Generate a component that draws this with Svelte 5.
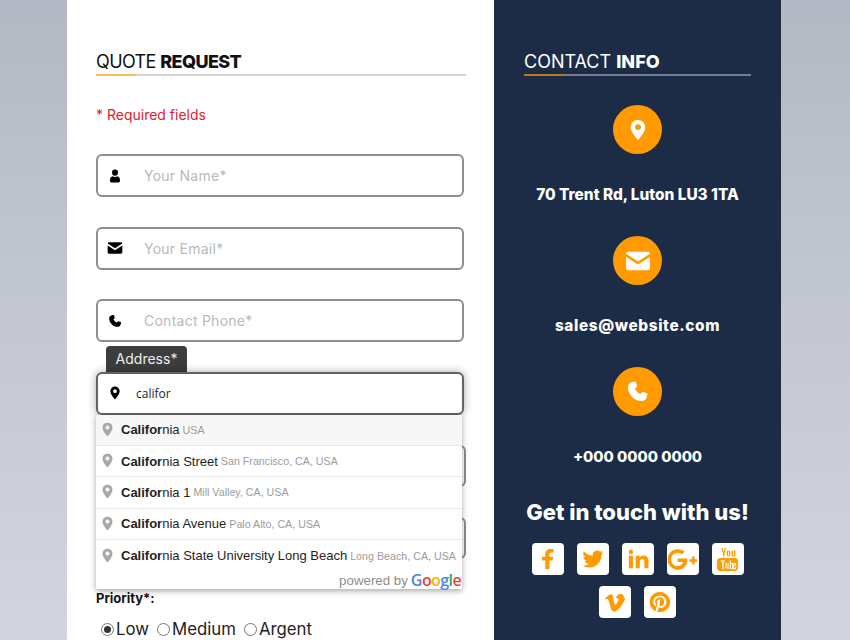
<script>
  const fields = [
    { ph: 'Your Name*', icon: 'user' },
    { ph: 'Your Email*', icon: 'mail' },
    { ph: 'Contact Phone*', icon: 'phone' }
  ];
  const suggestions = [
    { tail: '', sub: 'USA', active: true },
    { tail: ' Street', sub: 'San Francisco, CA, USA' },
    { tail: ' 1', sub: 'Mill Valley, CA, USA' },
    { tail: ' Avenue', sub: 'Palo Alto, CA, USA' },
    { tail: ' State University Long Beach', sub: 'Long Beach, CA, USA' }
  ];
  const paths = {
    pin: 'M12 1a8 8 0 0 0-8 8c0 5.500 8 14 8 14s8-8.500 8-14a8 8 0 0 0-8-8zm0 11a3.200 3.200 0 1 1 0-6.400 3.200 3.200 0 0 1 0 6.400z',
    user: 'M12 1a5 5 0 0 1 5 5.500 5 5 0 0 1-10 0A5 5 0 0 1 12 1zM8 12.500c1 .8 2.500 1.300 4 1.300s3-.5 4-1.300c3 .4 4.500 3 4.500 6.500v2c0 1-1 2-2 2h-13c-1 0-2-1-2-2v-2c0-3.500 1.500-6.100 4.500-6.500z',
    mail: 'M3 3.500h18a2 2 0 0 1 2 1.800L12 12.500 1 5.300a2 2 0 0 1 2-1.800zM1 8.300l11 7 11-7V18.500a2 2 0 0 1-2 2H3a2 2 0 0 1-2-2z',
    phone: 'M6.600 2.200 9 1.600c.5-.1 1 .1 1.200.6l1.300 3.800c.2.400 0 .9-.3 1.200L9.300 8.800c1 2.400 3.400 4.900 5.900 5.900l1.600-1.900c.3-.3.800-.5 1.200-.3l3.800 1.300c.5.200.7.700.6 1.200l-.6 2.400C21.200 20.200 19 22 16.500 22 9 22 2 15 2 7.500 2 5 3.800 2.800 6.600 2.200z'
  };
</script>

<div class="page">
  <main class="sheet">
    <section class="form-col">
      <h2 class="title dark"><span>QUOTE</span> <b>REQUEST</b></h2>
      <p class="required">* Required fields</p>

      <div class="fields">
        {#each fields as f}
          <div class="field">
            <svg class="ficon {f.icon}" viewBox="0 0 24 24"><path d={paths[f.icon]} /></svg>
            <span class="ph">{f.ph}</span>
          </div>
        {/each}

        <div class="addr">
          <div class="addr-label">Address*</div>
          <div class="field focus">
            <svg class="ficon" viewBox="0 0 24 24"><path d={paths.pin} /></svg>
            <span class="typed">califor</span>
          </div>
          <div class="under">
            <div class="ghost"></div>
            <div class="ghost"></div>
          </div>
          <div class="pac">
            {#each suggestions as s}
              <div class="pac-row" class:active={s.active}>
                <svg class="pac-pin" viewBox="0 0 24 24"><path d={paths.pin} /></svg>
                <span class="pac-main"><b>Califor</b>nia{s.tail}</span>
                <span class="pac-sub">{s.sub}</span>
              </div>
            {/each}
            <div class="powered">
              <span>powered by</span>
              <span class="google"><i class="b">G</i><i class="r">o</i><i class="y">o</i><i class="b">g</i><i class="g">l</i><i class="r">e</i></span>
            </div>
          </div>
        </div>
      </div>

      <div class="priority">
        <div class="plabel">Priority*:</div>
        <div class="radios">
          <span class="radio on"></span><span class="rtext">Low</span>
          <span class="radio"></span><span class="rtext">Medium</span>
          <span class="radio"></span><span class="rtext">Argent</span>
        </div>
      </div>
    </section>

    <aside class="info-col">
      <h2 class="title light"><span>CONTACT</span> <b>INFO</b></h2>

      <div class="circle first"><svg class="c-pin" viewBox="0 0 24 24"><path d={paths.pin} /></svg></div>
      <div class="info-text">70 Trent Rd, Luton LU3 1TA</div>
      <div class="circle"><svg class="c-mail" viewBox="0 0 24 24"><path d={paths.mail} /></svg></div>
      <div class="info-text wide">sales@website.com</div>
      <div class="circle"><svg class="c-phone" viewBox="0 0 24 24"><path d={paths.phone} /></svg></div>
      <div class="info-text num">+000 0000 0000</div>

      <div class="touch">Get in touch with us!</div>
      <div class="socials">
        <div class="soc"><svg viewBox="0 0 24 24"><path d="M9 23v-9.500H5.500V9.500H9V7c0-3.800 2.200-6 5.700-6 1.500 0 2.800.1 3.300.2v3.800h-2.300c-1.800 0-2.200.9-2.200 2.100v2.400h4.300l-.6 4h-3.700V23z" /></svg></div>
        <div class="soc"><svg viewBox="0 0 24 24"><path d="M23.500 5a9.300 9.300 0 0 1-2.700.7 4.700 4.700 0 0 0 2-2.600 9.400 9.400 0 0 1-3 1.100 4.700 4.700 0 0 0-8 4.300A13.300 13.300 0 0 1 2.100 3.600 4.700 4.700 0 0 0 3.600 9.900a4.700 4.700 0 0 1-2.100-.6c0 2.300 1.600 4.300 3.800 4.700a4.700 4.700 0 0 1-2.100.1 4.700 4.700 0 0 0 4.400 3.200A9.400 9.400 0 0 1 .6 19.300 13.300 13.300 0 0 0 7.800 21.400c8.700 0 13.500-7.200 13.500-13.500v-.6A9.500 9.500 0 0 0 23.500 5z" /></svg></div>
        <div class="soc"><svg viewBox="0 0 24 24"><path d="M2 8.500h4.500V22H2zM4.250 2a2.400 2.400 0 1 1 0 4.800 2.400 2.400 0 0 1 0-4.800zM9.500 8.500h4.300v1.900c.7-1.200 2.200-2.200 4.300-2.200 4.300 0 5.400 2.700 5.400 6.700V22H19v-6.300c0-2-.4-3.600-2.400-3.600s-2.700 1.500-2.700 3.500V22H9.500z" /></svg></div>
        <div class="soc"><svg class="s-gplus" viewBox="0 0 24 24"><path d="M8 11.200v2.900h4.500c-.4 2-2.100 3.400-4.500 3.400a5.500 5.500 0 0 1 0-11c1.400 0 2.600.5 3.500 1.300l2.200-2.200A8.500 8.500 0 1 0 8 20.500c4.900 0 8-3.400 8-8.200 0-.4 0-.8-.1-1.100zM20 9.500v2.300h-2.300v2H20v2.300h2v-2.300h2v-2h-2V9.500z" /></svg></div>
        <div class="soc"><svg class="s-yt" viewBox="0 0 24 24"><path d="M6 1h1.400l1 3.500L9.400 1h1.400L9.100 5.900V9H7.700V5.900zM13 3.300c1.100 0 1.800.7 1.800 1.800v2.200c0 1.100-.7 1.800-1.800 1.800s-1.800-.7-1.800-1.800V5.100c0-1.100.7-1.800 1.800-1.800zm-.5 1.500v2.800c0 .8 1 .8 1 0V4.800c0-.8-1-.8-1 0zM16 3.400h1.300v4.500c0 .4.600.3.900-.1V3.400h1.300V9h-1.300v-.6c-.8.900-2.200 1-2.200-.3zM5 10.500h14a3 3 0 0 1 3 3v6.500a3 3 0 0 1-3 3H5a3 3 0 0 1-3-3v-6.500a3 3 0 0 1 3-3zm.5 2.300v1.200h1.400v7H8.200v-7h1.400v-1.200zm4.500 2.200v4.900c0 1.200 1.300 1 2-.1v1h1.100V15H12v4.500c-.3.400-.9.500-.9.100V15zm4.200-2.200V21h1.100v-.5c.9 1 2.100.5 2.100-.8v-3.300c0-1.400-1.200-1.800-2.100-.8v-2.800zm1.100 3.700c.3-.4 1-.4 1 .2v2.900c0 .6-.7.6-1 .2zm5.100 1.800v-1.300c0-2.400-3.300-2.400-3.300 0v2.700c0 2.500 3.300 2.400 3.300 0v-.4h-1.100c0 1.300-1.100 1.300-1.100.2v-1.200zm-2.200-1c0-1.200 1.100-1.200 1.100 0v.2h-1.100z" /></svg></div>
        <div class="soc"><svg viewBox="0 0 24 24"><path d="M23 7.500c-.1 2.200-1.600 5.200-4.600 9-3 4-5.600 6-7.700 6-1.300 0-2.400-1.200-3.300-3.600L5.600 12C4.900 9.600 4.200 8.400 3.500 8.400c-.2 0-.7.300-1.600 1L1 8.100c1-.9 2-1.700 3-2.600 1.300-1.200 2.400-1.800 3-1.900 1.600-.2 2.600.9 3 3.300.4 2.500.7 4.100.8 4.700.5 2.100 1 3.100 1.600 3.100.4 0 1.100-.7 1.900-2 .9-1.400 1.300-2.400 1.400-3.100.1-1.200-.4-1.800-1.400-1.800-.5 0-1 .1-1.500.3 1-3.300 3-4.900 5.800-4.800 2.100.1 3.200 1.500 3 4.200z" /></svg></div>
        <div class="soc"><svg viewBox="0 0 24 24"><path fill-rule="evenodd" d="M12 1a11 11 0 1 1-3.300 21.500c.4-.7 1-1.700 1.300-2.700l.7-2.600c.3.700 1.400 1.300 2.500 1.300 3.400 0 5.800-3.100 5.800-7 0-3.700-3-6.400-6.900-6.400-4.800 0-7.400 3.200-7.400 6.800 0 1.700.9 3.700 2.300 4.400.2.100.4 0 .4-.2l.3-1.300c0-.1 0-.3-.1-.4-.5-.6-.9-1.600-.9-2.600 0-2.500 1.900-4.900 5.100-4.900 2.800 0 4.700 1.900 4.700 4.600 0 3-1.500 5.100-3.500 5.100-1.100 0-1.900-.9-1.700-2 .3-1.300.9-2.700.9-3.700 0-.8-.4-1.500-1.400-1.500-1.100 0-2 1.200-2 2.700 0 1 .3 1.600.3 1.600l-1.400 5.700c-.2.900-.1 2-.1 2.800A11 11 0 0 1 12 1z" /></svg></div>
      </div>
    </aside>
  </main>
</div>

<style>
  :global(body) { margin: 0; }
  .page {
    width: 850px;
    height: 640px;
    overflow: hidden;
    background: linear-gradient(180deg, #b4b8c4 0%, #c2c6d0 45%, #d2d5de 100%);
    font-family: "Inter", "Liberation Sans", sans-serif;
  }
  .sheet { display: flex; width: 714px; height: 640px; margin-left: 67px; }
  .form-col { width: 427px; background: #fff; padding: 52px 29px 0; box-sizing: border-box; overflow: hidden; }
  .info-col { width: 287px; background: #1c2c47; padding: 52px 30px 0; box-sizing: border-box; color: #fff; text-align: center; }

  .title {
    position: relative;
    margin: 0;
    font-size: 18px;
    line-height: 20px;
    height: 22px;
    font-weight: 400;
    text-align: left;
    border-bottom: 2px solid #d6d6d6;
  }
  .title b { font-weight: 800; }
  .title::after {
    content: "";
    position: absolute;
    left: 0;
    bottom: -2px;
    width: 40px;
    height: 2px;
    background: #fbbf62;
  }
  .dark { color: #111; width: 370px; letter-spacing: -0.6px; }
  .light { color: #fff; width: 227px; border-bottom-color: #747d8b; }
  .light::after { background: #b97a1d; }

  .required { margin: 29px 0 0; font-size: 14px; line-height: 20px; color: #e2202c; }

  .fields { margin-top: 29px; display: flex; flex-direction: column; gap: 29.5px; width: 368px; }
  .field {
    display: flex;
    align-items: center;
    height: 43px;
    box-sizing: border-box;
    border: 2px solid #8c8e90;
    border-radius: 6px;
    background: #fff;
    padding-left: 10px;
  }
  .ficon { width: 14px; height: 14px; fill: #000; flex: none; }
  .ficon.mail { width: 16px; height: 16px; margin: 0 -1px; }
  .ph { margin-left: 22px; font-size: 14px; color: #b9b9b9; letter-spacing: 0.25px; }

  .addr { position: relative; }
  .addr-label {
    position: absolute;
    left: 10px;
    top: -26px;
    width: 81px;
    height: 26px;
    line-height: 25px;
    text-align: center;
    font-size: 14px;
    color: #eee;
    background: #3d3d3d;
    border-radius: 4px 4px 0 0;
  }
  .focus { box-shadow: 0 0 8px rgba(0,0,0,.35); position: relative; z-index: 1; border-color: #606366; }
  .typed { margin-left: 14px; font-family: "Open Sans", sans-serif; font-size: 12px; color: #222; }

  .under { display: flex; flex-direction: column; gap: 30px; margin-top: 30px; margin-right: -2px; }
  .ghost { height: 42px; box-sizing: border-box; border: 2px solid #8c8e90; border-radius: 6px; }

  .pac {
    position: absolute;
    left: 0;
    top: 43px;
    width: 366px;
    background: #fff;
    box-shadow: 0 2px 6px rgba(0,0,0,.35);
    z-index: 2;
    font-family: "Liberation Sans", Arial, sans-serif;
  }
  .pac-row {
    display: flex;
    align-items: center;
    height: 31.4px;
    box-sizing: border-box;
    border-bottom: 1px solid #e9e9e9;
    padding-left: 4px;
    white-space: nowrap;
    overflow: hidden;
  }
  .pac-row:nth-child(5) { border-bottom: 0; }
  .pac-row.active { background: #f7f7f7; }
  .pac-pin { width: 15px; height: 15px; fill: #a8a8a8; flex: none; margin: -1px 6px 0 0; }
  .pac-main { font-size: 13px; color: #1f1f1f; }
  .pac-main b { font-weight: 700; }
  .pac-sub { font-size: 10.7px; color: #9c9c9c; margin-left: 3px; }
  .powered { display: flex; align-items: center; justify-content: flex-end; height: 18px; font-size: 13.3px; color: #8d8d8d; gap: 3px; padding-right: 1px; }
  .google { font-size: 16px; letter-spacing: -0.6px; }
  .google i { font-style: normal; font-family: "Open Sans", sans-serif; font-weight: 600; }
  .b { color: #4a86e8; } .r { color: #ea4335; } .y { color: #f4b400; } .g { color: #34a853; }

  .priority { margin-top: 30.5px; }
  .plabel { font-size: 13px; line-height: 18px; font-weight: 700; color: #111; }
  .radios { display: flex; align-items: center; margin: 12px 0 0 5px; font-size: 16.8px; line-height: 20px; color: #222; }
  .radio { width: 13px; height: 13px; border: 1px solid #767676; border-radius: 50%; box-sizing: border-box; position: relative; margin-right: 2px; }
  .radio.on::after { content: ""; position: absolute; inset: 2px; background: #333; border-radius: 50%; }
  .rtext { margin-right: 8px; }

  .circle { width: 49px; height: 49px; border-radius: 50%; background: #ff9b00; margin: 0 auto; display: flex; align-items: center; justify-content: center; }
  .circle.first { margin-top: 29px; }
  .circle svg { fill: #fff; }
  .c-pin { width: 22px; height: 22px; }
  .c-mail { width: 26px; height: 26px; }
  .c-phone { width: 23px; height: 23px; }
  .info-text { height: 20px; line-height: 20px; margin: 31px 0; font-size: 15.4px; font-weight: 800; white-space: nowrap; }
  .info-text.wide { letter-spacing: 0.6px; }
  .info-text.num { font-size: 14.8px; }
  .touch { margin: -30px -10px 0; font-size: 22px; line-height: 28px; font-weight: 800; white-space: nowrap; }
  .info-text.num + .touch { margin-top: 1px; }
  .socials { display: flex; flex-wrap: wrap; justify-content: center; gap: 11px 13px; margin: 17px -5px 0; }
  .soc { width: 32px; height: 32px; background: #fff; border-radius: 4px; display: flex; align-items: center; justify-content: center; }
  .soc svg { width: 22px; height: 22px; fill: #ff9b00; flex: none; }
  .soc svg.s-gplus { width: 29px; height: 29px; }
  .soc svg.s-yt { width: 25px; height: 25px; }
</style>
